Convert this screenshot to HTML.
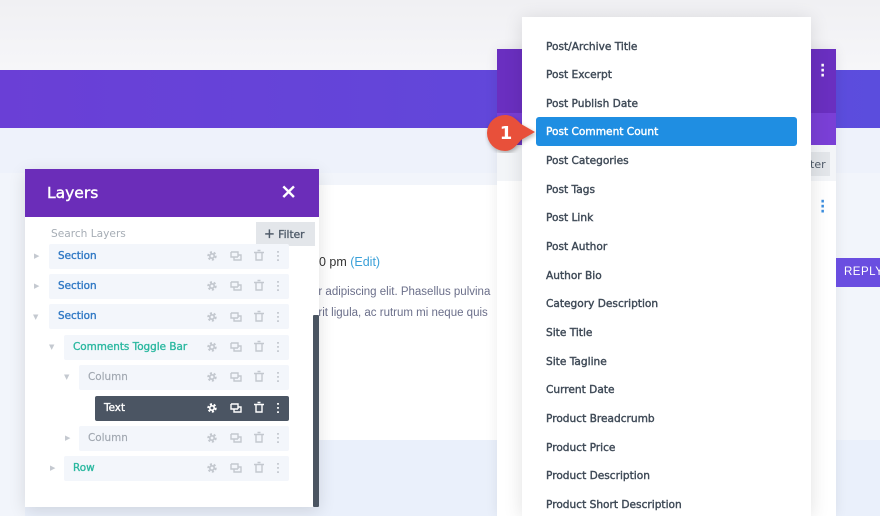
<!DOCTYPE html>
<html><head><style>
*{margin:0;padding:0;box-sizing:border-box}
body{width:880px;height:516px;overflow:hidden;background:#f2f5fb;font-family:"DejaVu Sans","Liberation Sans",sans-serif;position:relative}
.a{position:absolute}
.dd div{position:absolute;left:24px;font-size:10.6px;color:#3f4a57;-webkit-text-stroke:0.4px}
.row{position:absolute;height:25px;background:#f3f6fb;border-radius:2px;font-size:10.4px;-webkit-text-stroke:0.35px}
.row span{position:absolute;left:9px;top:6px}
.tri{position:absolute;font-size:7px;color:#c4c9d0}
</style></head><body>
<div class="a" style="left:0;top:0;width:880px;height:70px;background:linear-gradient(180deg,#f0f0f3,#f6f6f9)"></div>
<div class="a" style="left:0;top:70px;width:880px;height:58px;background:linear-gradient(90deg,#6a3fd6,#5b4ddd)"></div>
<div class="a" style="left:0;top:128px;width:880px;height:45px;background:#eef2fb"></div>
<div class="a" style="left:25px;top:185px;width:480px;height:255px;background:#fff"></div>
<div class="a" style="left:25px;top:440px;width:855px;height:76px;background:#eaf0fb"></div>
<div class="a" style="left:312px;top:255px;font-family:'Liberation Sans';font-size:12.5px;color:#333">00 pm <span style="color:#3aa0d8">(Edit)</span></div>
<div class="a" style="left:312px;top:282px;font-family:'Liberation Sans';font-size:11.5px;color:#6b6f8a;line-height:21px;white-space:nowrap">ur adipiscing elit. Phasellus pulvina<br>erit ligula, ac rutrum mi neque quis</div>
<!-- back panel -->
<div class="a" style="left:497px;top:49px;width:339px;height:467px;background:#fff;box-shadow:0 0 12px rgba(0,0,0,.08)"></div>
<div class="a" style="left:497px;top:49px;width:339px;height:64px;background:#6a2fc0"></div>
<div class="a" style="left:497px;top:113px;width:339px;height:32px;background:#7a3fd6"></div>
<div class="a" style="left:497px;top:145px;width:339px;height:36px;background:#f3f5f8"></div>
<div class="a" style="left:790px;top:152px;width:40px;height:24px;background:#e3e6ea;font-size:11px;color:#4e5a68;padding:6px 0 0 20px">ter</div>
<div class="a" style="left:820px;top:64px;color:#fff;font-size:14px;font-weight:bold;line-height:5px">·<br>·<br>·</div>
<div class="a" style="left:820px;top:200px;color:#3b8ee0;font-size:14px;font-weight:bold;line-height:5px">·<br>·<br>·</div>
<div class="a" style="left:836px;top:258px;width:44px;height:29px;background:#6a4ee0;color:#fff;font-family:'Liberation Sans';font-size:11.5px;padding:8px 0 0 8px;letter-spacing:.5px">REPLY</div>
<!-- dropdown -->
<div class="a dd" style="left:522px;top:17px;width:289px;height:499px;background:#fff;box-shadow:0 2px 18px rgba(0,0,0,.12)">
<div class="a" style="left:14px;top:100px;width:261px;height:29px;background:#1f8ee2;border-radius:3px;-webkit-text-stroke:0"></div>
<div style="top:24px">Post/Archive Title</div>
<div style="top:52px">Post Excerpt</div>
<div style="top:81px">Post Publish Date</div>
<div style="top:109px;color:#fff">Post Comment Count</div>
<div style="top:138px">Post Categories</div>
<div style="top:167px">Post Tags</div>
<div style="top:195px">Post Link</div>
<div style="top:224px">Post Author</div>
<div style="top:253px">Author Bio</div>
<div style="top:281px">Category Description</div>
<div style="top:310px">Site Title</div>
<div style="top:339px">Site Tagline</div>
<div style="top:367px">Current Date</div>
<div style="top:396px">Product Breadcrumb</div>
<div style="top:425px">Product Price</div>
<div style="top:453px">Product Description</div>
<div style="top:482px">Product Short Description</div>
</div>
<!-- badge -->
<svg class="a" style="left:485px;top:113px" width="56" height="40" viewBox="0 0 56 40">
<path d="M20 2 A18 18 0 1 0 20 38 C27 38 31 33 36 27 L50 19 L36 11 C31 6 27 2 20 2Z" fill="#e8503a" style="filter:drop-shadow(1px 2px 2px rgba(0,0,0,.3))"/>
<text x="21" y="26" fill="#fff" font-size="18" font-weight="bold" font-family="DejaVu Sans" text-anchor="middle">1</text>
</svg>
<!-- layers panel -->
<div class="a" style="left:25px;top:169px;width:294px;height:338px;background:#fff;box-shadow:0 4px 16px rgba(0,0,0,.12)"></div>
<div class="a" style="left:25px;top:169px;width:294px;height:48px;background:#6b2db9;color:#fff;font-size:15.5px;padding:15px 0 0 22px;-webkit-text-stroke:0.4px">Layers<span style="position:absolute;right:22px;top:11px;font-size:20px">✕</span></div>
<div class="a" style="left:51px;top:228px;font-size:10.6px;color:#a6adb5">Search Layers</div>
<div class="a" style="left:256px;top:222px;width:59px;height:24px;background:#e3e6ea;font-size:10.6px;color:#4e5a68;padding:5px 0 0 8px;white-space:nowrap;-webkit-text-stroke:0.35px"><span style="font-size:13px">+</span> Filter</div>
<div class="a" style="left:313px;top:315px;width:6px;height:192px;background:#4a5461;border-radius:1px"></div>

<div class="tri" style="left:34px;top:252px">▶</div>
<div class="row" style="left:49px;top:244px;width:240px;color:#2f78c4"><span>Section</span></div>
<div class="tri" style="left:34px;top:282px">▶</div>
<div class="row" style="left:49px;top:274px;width:240px;color:#2f78c4"><span>Section</span></div>
<div class="tri" style="left:33px;top:313px">▼</div>
<div class="row" style="left:49px;top:304px;width:240px;color:#2f78c4"><span>Section</span></div>
<div class="tri" style="left:49px;top:343px">▼</div>
<div class="row" style="left:64px;top:335px;width:225px;color:#2bb8a0"><span>Comments Toggle Bar</span></div>
<div class="tri" style="left:64px;top:373px">▼</div>
<div class="row" style="left:79px;top:365px;width:210px;color:#a0a7b0;-webkit-text-stroke:0.15px"><span>Column</span></div>
<div class="row" style="left:95px;top:396px;width:194px;background:#4b5563;color:#fff"><span>Text</span></div>
<div class="tri" style="left:65px;top:434px">▶</div>
<div class="row" style="left:79px;top:426px;width:210px;color:#a0a7b0;-webkit-text-stroke:0.15px"><span>Column</span></div>
<div class="tri" style="left:50px;top:464px">▶</div>
<div class="row" style="left:64px;top:456px;width:225px;color:#2bb8a0"><span>Row</span></div>

<svg class="a" style="left:200px;top:244px" width="90" height="240" viewBox="0 0 90 240">
<defs>
<g id="g"><circle cx="12" cy="0" r="3.5" fill="none" stroke-width="2.4" stroke-dasharray="2 1.6"/><circle cx="12" cy="0" r="2.2" fill="none" stroke-width="1.6"/>
<path d="M31 -4h7v5 M31 -4v5h7 M34 1v3h7v-5h-3" fill="none" stroke-width="1.4"/>
<path d="M54 -3.5h10 M56 -3.5v7.5h6v-7.5 M57.5 -5.5h3" fill="none" stroke-width="1.4"/>
<path d="M78 -5v1.8 M78 -1v1.8 M78 3.2v1.8" stroke-width="1.8"/></g>
</defs>
<g stroke="#c3c8cf"><use href="#g" y="12"/><use href="#g" y="42"/><use href="#g" y="73"/><use href="#g" y="103"/><use href="#g" y="133"/><use href="#g" y="194"/><use href="#g" y="224"/></g>
<g stroke="#fff"><use href="#g" y="164"/></g>
</svg>
</body></html>
